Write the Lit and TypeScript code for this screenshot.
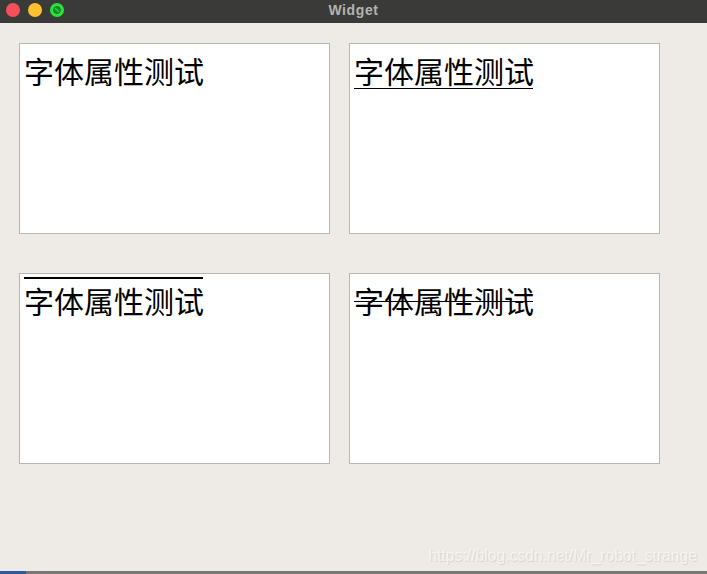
import { LitElement, html, css } from "lit";
import { customElement } from "lit/decorators.js";

const TEXT = "字体属性测试";

@customElement("app-root")
export class AppRoot extends LitElement {
  static styles = css`
    :host { display: block; width: 707px; height: 574px; overflow: hidden; background: #eeebe7; position: relative; font-family: "Noto Sans CJK SC", "Liberation Sans", sans-serif; }
    .titlebar { height: 23px; background: #3a3a38; display: flex; align-items: center; position: relative; box-sizing: border-box; padding: 0 0 3px 6px; gap: 8px; }
    .dot { width: 14px; height: 14px; border-radius: 50%; display: block; }
    .red { background: #f8505a; }
    .yellow { background: #fdc130; }
    .green { background: #2be23c; }
    .title { position: absolute; left: 0; right: 0; top: 1px; text-align: center; font: bold 14px/18px "Liberation Sans", sans-serif; color: #b3b3b0; letter-spacing: 0.6px; }
    .grid { display: grid; grid-template-columns: 311px 311px; grid-template-rows: 191px 191px; column-gap: 19px; row-gap: 39px; padding: 20px 0 0 19px; }
    .box { background: #fff; border: 1px solid #b9b6b2; box-sizing: border-box; padding: 4px 0 0 4px; }
    .t { display: inline-block; position: relative; font-size: 30px; line-height: 44px; color: #000; white-space: nowrap; }
    .t.u::after, .t.o::after, .t.s::after { content: ""; position: absolute; left: 0; right: 1px; background: #000; }
    .t.u::after { top: 40px; height: 1px; }
    .t.o::after { top: -1px; height: 2px; }
    .t.s::after { top: 23px; height: 1px; }
    .mark { position: absolute; right: 10px; bottom: 8px; font: 15.7px/20px "Liberation Sans", sans-serif; color: rgba(255,255,255,.6); text-shadow: 1px 1px 1px rgba(0,0,0,.1); }
    .bottom { position: absolute; left: 0; right: 0; bottom: 0; height: 3px; background: #777773; display: flex; }
    .bottom span { width: 26px; background: #2d5c9e; display: block; }
  `;
  render() {
    return html`
      <div class="titlebar">
        <span class="dot red"></span>
        <span class="dot yellow"></span>
        <svg class="dot green" viewBox="0 0 14 14"><circle cx="7" cy="7" r="3.4" fill="#1f8f30" stroke="#17702a" stroke-width="1"/><path d="M4.8 4.8 9.2 9.2" stroke="#2be23c" stroke-width="1.2"/></svg>
        <div class="title">Widget</div>
      </div>
      <div class="grid">
        <div class="box"><span class="t">${TEXT}</span></div>
        <div class="box"><span class="t u">${TEXT}</span></div>
        <div class="box"><span class="t o">${TEXT}</span></div>
        <div class="box"><span class="t s">${TEXT}</span></div>
      </div>
      <div class="mark">https://blog.csdn.net/Mr_robot_strange</div>
      <div class="bottom"><span></span></div>
    `;
  }
}
